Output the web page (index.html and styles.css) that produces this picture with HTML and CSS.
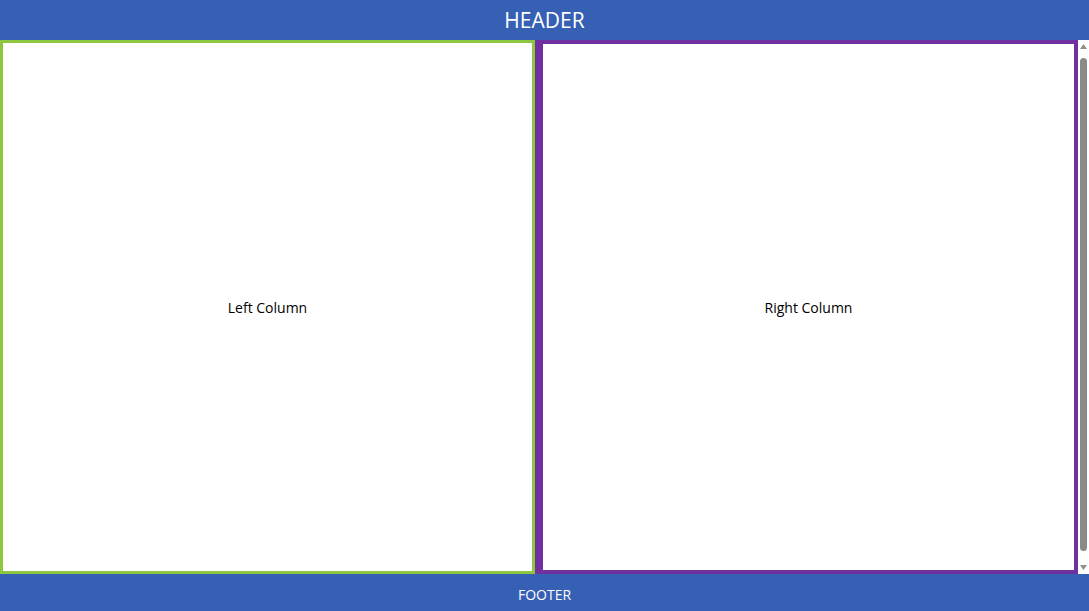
FILE: index.html
```html
<!DOCTYPE html>
<html lang="en">
<head>
<meta charset="utf-8">
<title>Layout</title>
<link rel="stylesheet" href="styles.css">
</head>
<body>
<div class="page">
  <header class="header">HEADER</header>
  <main class="main">
    <div class="columns">
      <section class="col col-left">Left Column</section>
      <section class="col col-right">Right Column</section>
    </div>
    <div class="scrollbar" aria-hidden="true">
      <svg class="arrow" width="11" height="12" viewBox="0 0 11 12"><path d="M5.5 4L9 9H2z" fill="#8f8f8f"/></svg>
      <div class="track"><div class="thumb"></div></div>
      <svg class="arrow" width="11" height="12" viewBox="0 0 11 12"><path d="M2 3H9L5.5 8z" fill="#8f8f8f"/></svg>
    </div>
  </main>
  <footer class="footer">FOOTER</footer>
</div>
</body>
</html>
```

FILE: styles.css
```css
html, body {
  margin: 0;
  padding: 0;
  height: 100%;
}
body {
  font-family: "Open Sans", "Noto Sans", sans-serif;
  color: #000;
  background: #fff;
}
.page {
  display: flex;
  flex-direction: column;
  height: 611px;
}
.header {
  height: 40px;
  flex: 0 0 40px;
  background: #3660b4;
  color: #fff;
  font-size: 21px;
  display: flex;
  align-items: center;
  justify-content: center;
}
.main {
  flex: 0 0 534px;
  height: 534px;
  display: flex;
}
.columns {
  flex: 1;
  display: flex;
  height: 534px;
}
.col {
  box-sizing: border-box;
  display: flex;
  align-items: center;
  justify-content: center;
  font-size: 14px;
  background: #fff;
}
.col-left {
  flex: 0 0 535px;
  border: 3px solid #8dc63f;
}
.col-right {
  flex: 1;
  border: 4px solid #7030a0;
  border-left-width: 8px;
}
.scrollbar {
  flex: 0 0 11px;
  display: flex;
  flex-direction: column;
  background: #fff;
}
.arrow {
  display: block;
  flex: 0 0 12px;
}
.track {
  flex: 1;
  padding: 6px 2px 11px;
  display: flex;
}
.thumb {
  flex: 1;
  background: #8a8a8a;
  border-radius: 4px;
}
.footer {
  flex: 0 0 37px;
  height: 37px;
  box-sizing: border-box;
  padding-top: 4px;
  background: #3660b4;
  color: #fff;
  font-size: 14px;
  display: flex;
  align-items: center;
  justify-content: center;
}
```
